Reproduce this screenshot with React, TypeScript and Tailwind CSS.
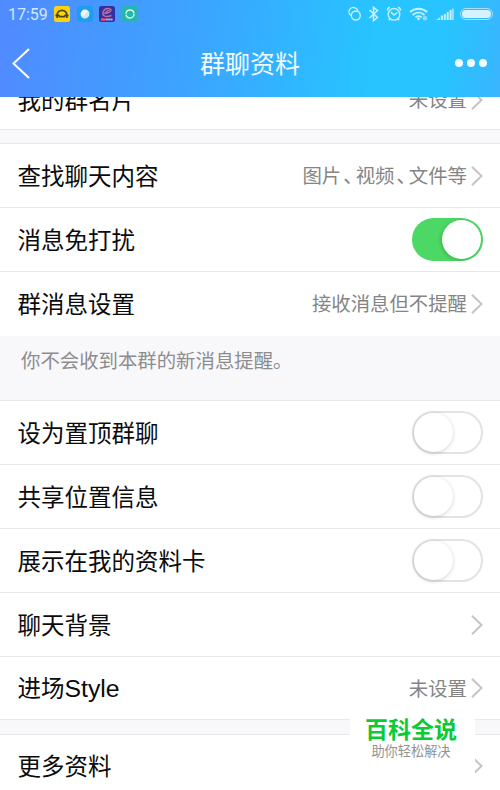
import type { ReactNode } from 'react';

function Chevron() {
  return (
    <svg className="ml-1 h-5 w-3 shrink-0" viewBox="0 0 12 20" fill="none" stroke="#c4c4c6" strokeWidth="2">
      <path d="M1 .8 10.500 10 1 19.200" />
    </svg>
  );
}

function Toggle({ on = false }: { on?: boolean }) {
  return on ? (
    <div className="flex h-[43px] w-[71px] items-center justify-end rounded-full bg-[#4cd864] pr-[2px]">
      <div className="h-[39px] w-[39px] rounded-full bg-white shadow-[-1px_1px_4px_rgba(0,0,0,0.18)]" />
    </div>
  ) : (
    <div className="-mt-px flex h-[43px] w-[71px] items-center rounded-full border-2 border-[#e3e3e3] bg-white">
      <div className="h-[39px] w-[39px] shrink-0 rounded-full bg-white shadow-[0_1px_4px_rgba(0,0,0,0.18)]" />
    </div>
  );
}

type RowProps = { label: ReactNode; value?: ReactNode; children?: ReactNode; last?: boolean; short?: boolean };

function Row({ label, value, children, last = false, short = false }: RowProps) {
  return (
    <div className={`flex shrink-0 items-center justify-between border-b bg-white pr-[17px] pl-[17.5px] ${short ? 'h-[63px]' : 'h-16'} ${last ? 'border-transparent' : 'border-[#e8e8ea]'}`}>
      <span className="pt-[2px] text-[23.5px] leading-8 text-[#0b0b0b]">{label}</span>
      {children ?? (
        <div className="flex items-center">
          <span className="pt-px text-[19.4px] leading-7 text-[#858585]">{value}</span>
          <Chevron />
        </div>
      )}
    </div>
  );
}

function Pause() {
  return <span className="-mr-[7px] ml-[2px]">、</span>;
}

function StatusBar() {
  return (
    <div className="flex h-7 items-center justify-between pr-[7px] pl-2">
      <div className="flex items-center gap-[6px]">
        <span className="mr-[2px] w-[38px] pt-px font-['Roboto','Noto_Sans_CJK_SC',sans-serif] text-[16px] leading-5 whitespace-nowrap text-[#d3e7ff]">17:59</span>
        <svg className="h-4 w-4" viewBox="0 0 16 16">
          <rect width="16" height="16" rx="2.5" fill="#fed30a" />
          <path d="M3.200 12V8.800a4.800 4.500 0 0 1 9.600 0V12M1.500 9.300h3.200l1 1.300h4.600l1-1.300h3.200" fill="none" stroke="#4b4420" strokeWidth="1.8" />
        </svg>
        <svg className="ml-[1px] h-4 w-4" viewBox="0 0 16 16">
          <rect width="16" height="16" rx="2.5" fill="#219ded" />
          <circle cx="8" cy="8" r="4.4" fill="#f4fbff" />
          <path d="m4.500 11 7.500-6c.8 3-1 7-4 7.300-1.500 0-2.800-.4-3.500-1.300Z" fill="#cdeafa" />
        </svg>
        <svg className="h-4 w-4" viewBox="0 0 16 16">
          <rect width="16" height="16" rx="2.5" fill="#31309f" />
          <path d="M5 7c3 1 7-1 7-3S6 1.500 4.300 5.500 6 12 12.500 9.500M7 7c0-2 3-3 3-2" fill="none" stroke="#bd719f" strokeWidth="1.4" />
          <path d="M2 13.500h4" stroke="#ff4770" strokeWidth="2.5" />
          <path d="M6.500 13.500h7" stroke="#d9d4ff" strokeWidth="2" strokeDasharray="1.3 .6" />
        </svg>
        <svg className="ml-[1px] h-4 w-4" viewBox="0 0 16 16">
          <rect width="16" height="16" rx="2.5" fill="#29b6aa" />
          <circle cx="8" cy="8" r="4" fill="none" stroke="#c7fff0" strokeWidth="1.4" strokeDasharray="11.600 .9" />
        </svg>
      </div>
      <svg className="h-5 w-[148px]" viewBox="345 4 148 20" fill="none" stroke="#c9f0ff" strokeWidth="1.4">
        <circle cx="355.800" cy="15.500" r="4.500" />
        <path d="M351 15.500a4.200 4.200 0 1 1 4.500-7.300 4.300 4.300 0 0 1 2.400 2.600" />
        <path d="m369.500 10 8 7.500-4 3.200V7.300l4 3.200-8 7.500" strokeWidth="1.600" />
        <circle cx="394" cy="14.300" r="5.800" />
        <path d="m390.800 12 3.200 3 3.400-2.500M387.400 10.500c.1-1.700 1-2.900 2.500-3.300M400.600 10.500c-.1-1.700-1-2.900-2.500-3.300m-8.200 11.700-1 1.300m9.200-1.300 1 1.300" />
        <path d="M410 12.200c5-4.600 12.200-4.600 17.200 0M412.600 15c3.600-3.200 8.400-3.200 12 0M415.500 17.300c2-1.500 4.200-1.500 6.200 0" strokeWidth="1.800" />
        <circle cx="418.500" cy="18.800" r="1.400" fill="#c9f0ff" stroke="none" />
        <circle cx="425" cy="18.200" r="2.300" fill="#8edfff" stroke="none" />
        <path d="M436 20h4v-2.500Zm4.900 0h2v-4.500h-2Zm2.900 0h2v-6h-2Zm2.900 0h2v-8h-2Zm2.900 0h2v-10h-2Zm2 0h2V8.500h-1.300v11.500Z" fill="#c9f0ff" stroke="none" />
        <rect x="460.500" y="8.500" width="32" height="11" rx="5.500" stroke="#a5e1ff" strokeWidth="1" />
        <rect x="462" y="10" width="29" height="8" rx="4" fill="#d6f2ff" stroke="none" />
      </svg>
    </div>
  );
}

export default function App() {
  return (
    <div className="relative flex h-[790px] w-[500px] flex-col overflow-hidden bg-white font-['Liberation_Sans','Noto_Sans_CJK_SC',sans-serif]">
      <header className="h-[97.5px] shrink-0 bg-[linear-gradient(98deg,#518aff_0%,#3ba5ff_40%,#27c4ff_74%,#27c4ff_88%,#3ab5ff_100%)]">
        <StatusBar />
        <div className="flex h-[69px] items-center justify-between pr-[13px] pl-3">
          <svg className="h-8 w-[33px]" viewBox="0 0 33 32" fill="none" stroke="#fff" strokeWidth="2">
            <path d="M17 2 1.500 16.500 17 31" />
          </svg>
          <h1 className="pt-[2px] text-[25px] leading-9 font-normal text-[#eefaff]">群聊资料</h1>
          <div className="flex gap-1">
            <i className="h-2 w-2 rounded-full bg-[#f0fbff]" />
            <i className="h-2 w-2 rounded-full bg-[#f0fbff]" />
            <i className="h-2 w-2 rounded-full bg-[#f0fbff]" />
          </div>
        </div>
      </header>
      <main className="-mt-[0.5px] flex flex-col">
        <div className="flex h-[33px] shrink-0 flex-col justify-end overflow-hidden border-b border-[#e8e8ea]">
          <div className="flex h-[61px] shrink-0 flex-col justify-start">
            <Row label="我的群名片" value="未设置" last />
          </div>
        </div>
        <div className="h-[14px] shrink-0 border-b border-[#e8e8ea] bg-[#f8f8fb]" />
        <Row label="查找聊天内容" value={<>图片<Pause />视频<Pause />文件等</>} />
        <Row label="消息免打扰"><Toggle on /></Row>
        <Row label="群消息设置" value="接收消息但不提醒" last />
        <div className="flex h-[65px] items-start border-b border-[#e8e8ea] bg-[#f8f8fb] pt-[10.5px] pl-[21px]">
          <p className="text-[19.4px] leading-7 text-[#8d8d8f]">你不会收到本群的新消息提醒。</p>
        </div>
        <Row label="设为置顶群聊"><Toggle /></Row>
        <Row label="共享位置信息"><Toggle /></Row>
        <Row label="展示在我的资料卡"><Toggle /></Row>
        <Row label="聊天背景" />
        <Row label={<>进场<span className="text-[24.8px]">Style</span></>} value="未设置" short />
        <div className="h-[15px] shrink-0 border-b border-[#e8e8ea] bg-[#f8f8fb]" />
        <Row label="更多资料" last short />
      </main>
      <div className="absolute top-[713px] left-[350px] flex h-[64px] w-[125px] flex-col items-center bg-white pr-[3px]">
        <strong className="mt-[3px] text-[23px] leading-7 font-bold text-[#0acb36]">百科全说</strong>
        <span className="-mt-px text-[13.2px] leading-[18px] text-[#929292]">助你轻松解决</span>
      </div>
    </div>
  );
}
